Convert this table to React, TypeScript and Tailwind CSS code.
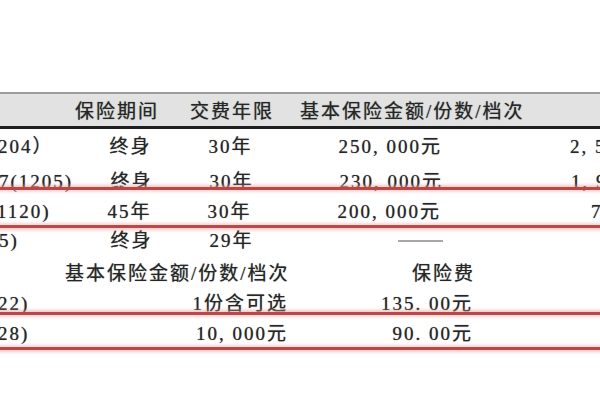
import React from "react";

const cell = "shrink-0 whitespace-nowrap";

export default function App() {
  return (
    <div className="relative w-[600px] h-[400px] overflow-hidden bg-white font-['Liberation_Serif','Noto_Sans_CJK_SC',serif] text-[19px] leading-none tracking-[2px] text-[#262626] [text-shadow:0_0_1px_rgba(0,0,0,0.55)]">
      <div className="h-[92px]" />
      {/* header */}
      <div className="flex h-[37px] items-center border-t-2 border-t-[#9c9c9c] border-b-[3px] border-b-[#1f1f1f] bg-[#e2e2e2] pt-[2px]">
        <div className={`${cell} w-[75px]`} />
        <div className={`${cell} w-[115px]`}>保险期间</div>
        <div className={`${cell} w-[110px]`}>交费年限</div>
        <div className={`${cell} w-[240px]`}>基本保险金额/份数/档次</div>
      </div>
      {/* row 1 */}
      <div className="flex h-[35px] items-center">
        <div className={`${cell} w-[75px] -ml-[2px]`}>204）</div>
        <div className={`${cell} w-[115px] text-center`}>终身</div>
        <div className={`${cell} w-[85px] text-center`}>30年</div>
        <div className={`${cell} w-[169px] text-right`}>250, 000元</div>
        <div className={`${cell} w-[245px] text-right`}>2, 537. 50元</div>
      </div>
      {/* row 2 */}
      <div className="flex h-[34px] items-center">
        <div className={`${cell} w-[75px] -ml-[1px]`}>7(1205)</div>
        <div className={`${cell} w-[115px] text-center`}>终身</div>
        <div className={`${cell} w-[85px] text-center`}>30年</div>
        <div className={`${cell} w-[169px] text-right`}>230, 000元</div>
        <div className={`${cell} w-[245px] text-right`}>1, 955. 20元</div>
      </div>
      {/* row 3 */}
      <div className="flex h-[27px] items-center">
        <div className={`${cell} w-[75px] -ml-[3px]`}>1120)</div>
        <div className={`${cell} w-[115px] text-center`}>45年</div>
        <div className={`${cell} w-[85px] text-center`}>30年</div>
        <div className={`${cell} w-[169px] text-right`}>200, 000元</div>
        <div className={`${cell} w-[242px] text-right`}>728. 00元</div>
      </div>
      {/* row 4 */}
      <div className="flex h-[31px] items-center">
        <div className={`${cell} w-[75px] -ml-[1px]`}>5)</div>
        <div className={`${cell} w-[115px] text-center`}>终身</div>
        <div className={`${cell} w-[85px] text-center`}>29年</div>
        <div className={`${cell} flex w-[169px] justify-end`}>
          <div className="h-[2px] w-[45px] bg-[#a8a8a8]" />
        </div>
      </div>
      {/* row 5 */}
      <div className="flex h-[35px] items-center">
        <div className={`${cell} w-[65px]`} />
        <div className={`${cell} w-[233px]`}>基本保险金额/份数/档次</div>
        <div className={`${cell} w-[177px] text-right`}>保险费</div>
      </div>
      {/* row 6 */}
      <div className="flex h-[25px] items-center">
        <div className={`${cell} w-[65px] -ml-[2px]`}>22)</div>
        <div className={`${cell} w-[233px] pr-[8px] text-right`}>1份含可选</div>
        <div className={`${cell} w-[177px] text-right`}>135. 00元</div>
      </div>
      {/* row 7 */}
      <div className="flex h-[35px] items-center">
        <div className={`${cell} w-[65px] -ml-[2px]`}>28)</div>
        <div className={`${cell} w-[233px] pr-[8px] text-right`}>10, 000元</div>
        <div className={`${cell} w-[177px] text-right`}>90. 00元</div>
      </div>

      {/* red highlight frames */}
      <div className="pointer-events-none absolute left-[-10px] right-[-10px] top-[187px] h-[41px] border-y-[3px] border-[#b64a47] shadow-[0_0_3px_2px_rgba(240,150,150,0.55),inset_0_0_3px_2px_rgba(240,160,160,0.45)]" />
      <div className="pointer-events-none absolute left-[-10px] right-[-10px] top-[312px] h-[38px] border-y-[3px] border-[#b64a47] shadow-[0_0_3px_2px_rgba(240,150,150,0.55),inset_0_0_3px_2px_rgba(240,160,160,0.45)]" />
    </div>
  );
}
